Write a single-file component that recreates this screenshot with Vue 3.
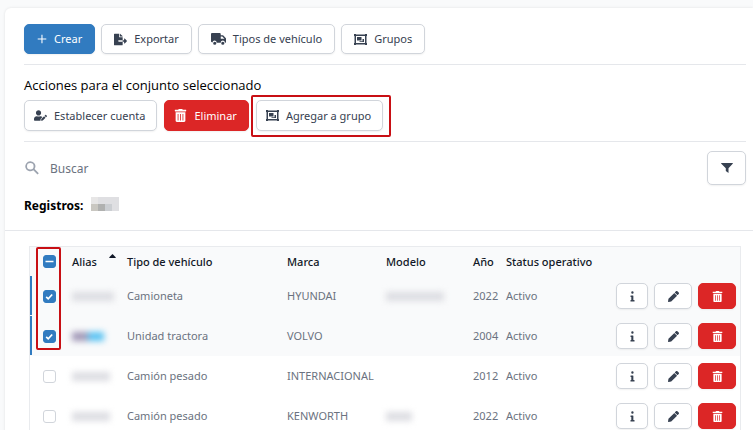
<script setup>
import { ref, computed } from 'vue'

const icons = {
  plus: { box: '0 0 14 14', d: 'M6.2 1h1.5v5.3H13v1.5H7.700V13H6.200V7.800H1V6.300h5.200z' },
  export: { box: '0 0 576 512', d: 'M384 121.900c0-6.300-2.500-12.400-7-16.900L279.100 7c-4.500-4.500-10.600-7-17-7H256v128h128zM571 308l-95.700-96.400c-10.100-10.100-27.400-3-27.400 11.300V288h-64v64h64v65.200c0 14.300 17.300 21.400 27.400 11.300L571 332c6.600-6.600 6.600-17.400 0-24zm-379 28v-32c0-8.800 7.200-16 16-16h176V160H248c-13.200 0-24-10.800-24-24V0H24C10.700 0 0 10.700 0 24v464c0 13.300 10.700 24 24 24h336c13.300 0 24-10.700 24-24V352H208c-8.800 0-16-7.200-16-16z' },
  truck: { box: '0 0 640 512', d: 'M48 0h320c26 0 48 22 48 48v48h76c13 0 25 5 34 14l100 100c9 9 14 21 14 34v124c0 26-12 48-32 48h-16c0-58-42-96-88-96s-88 38-88 96H240c0-58-42-96-88-96s-80 34-88 80C32 400 0 376 0 352V48C0 22 22 0 48 0zm368 144v96h160l-96-96zM160 368a68 68 0 1 1 0 136 68 68 0 0 1 0-136zm344 0a68 68 0 1 1 0 136 68 68 0 0 1 0-136z' },
  group: { box: '0 0 13 13', d: 'M0 1h2v.5h9V1h2v2h-.5v7h.5v2h-2v-.5H2v.5H0v-2h.5V3H0zM2 3v7h9V3zM3 4h4.500v3.500H3zM8.500 6H10v3H5.500v-.700h3z', rule: 'evenodd' },
  userEdit: { box: '0 0 640 512', d: 'M224 256c70.700 0 128-57.300 128-128S294.700 0 224 0 96 57.300 96 128s57.300 128 128 128zm89.600 32h-16.700c-22.200 10.200-46.900 16-72.900 16s-50.600-5.800-72.900-16h-16.700C60.200 288 0 348.200 0 422.400V464c0 26.500 21.500 48 48 48h274.900c-2.400-6.800-3.400-14-2.600-21.300l6.800-60.900 1.200-11.100 7.900-7.900 77.300-77.300c-24.500-27.700-60-45.500-99.900-45.500zm45.300 145.300l-6.800 61c-1.100 10.200 7.500 18.800 17.600 17.600l60.900-6.800 137.900-137.900-71.700-71.700zM633 268.900L595.100 231c-9.300-9.300-24.500-9.300-33.800 0l-41.800 41.800 71.800 71.700 41.700-41.700c9.300-9.400 9.300-24.500 0-33.900z' },
  pencil: { box: '0 0 512 512', d: 'M497.900 142.100l-46.100 46.100c-4.700 4.700-12.300 4.700-17 0l-111-111c-4.700-4.700-4.700-12.300 0-17l46.100-46.100c18.700-18.700 49.100-18.700 67.900 0l60.100 60.100c18.800 18.700 18.800 49.100 0 67.900zM284.200 99.800L21.600 362.400.4 483.900c-2.900 16.400 11.400 30.600 27.800 27.800l121.500-21.300 262.600-262.600c4.700-4.700 4.700-12.300 0-17l-111-111c-4.800-4.700-12.400-4.700-17.100 0z' },
  info: { box: '0 0 192 512', d: 'M20 424h20V280H20c-11 0-20-9-20-20v-36c0-11 9-20 20-20h96c11 0 20 9 20 20v200h36c11 0 20 9 20 20v28c0 11-9 20-20 20H20c-11 0-20-9-20-20v-28c0-11 9-20 20-20zM92 16a56 56 0 1 1 0 112 56 56 0 0 1 0-112z' },
  filter: { box: '0 0 12 12', d: 'M.5 1h11c.4 0 .5.500.2.800L7.500 6.300V11L4.800 9V6.300L.3 1.800C0 1.500.1 1 .5 1z' },
  search: { box: '0 0 14 14', d: 'M5.300.3a5 5 0 1 0 3 9l4.200 4.200 1.300-1.300-4.200-4.200A5 5 0 0 0 5.300.3zm0 1.700a3.300 3.300 0 1 1 0 6.600 3.300 3.300 0 0 1 0-6.600z' },
  trash: { box: '0 0 448 512', d: 'M432 32H312l-9-19a24 24 0 0 0-22-13H167c-9 0-17 5-21 13l-10 19H16C7 32 0 39 0 48v32c0 9 7 16 16 16h416c9 0 16-7 16-16V48c0-9-7-16-16-16zM32 128h384v336c0 27-21 48-48 48H80c-27 0-48-21-48-48zm80 64v256h32V192zm96 0v256h32V192zm96 0v256h32V192z', rule: 'evenodd' },
}

const Icon = (props) => {
  const icon = icons[props.name]
  return h('svg', { viewBox: icon.box, class: 'icon', 'aria-hidden': 'true' }, [
    h('path', { d: icon.d, fill: 'currentColor', 'fill-rule': icon.rule || 'nonzero' }),
  ])
}
Icon.props = ['name']

const search = ref('')
const rows = ref([
  { checked: true, tint: 'gray', alias: 42, type: 'Camioneta', brand: 'HYUNDAI', model: 58, year: 2022 },
  { checked: true, tint: 'color', alias: 32, type: 'Unidad tractora', brand: 'VOLVO', model: 0, year: 2004 },
  { checked: false, tint: 'gray', alias: 38, type: 'Camión pesado', brand: 'INTERNACIONAL', model: 0, year: 2012 },
  { checked: false, tint: 'gray', alias: 38, type: 'Camión pesado', brand: 'KENWORTH', model: 26, year: 2022 },
])
const all = computed(() => rows.value.every((r) => r.checked))
const some = computed(() => !all.value && rows.value.some((r) => r.checked))
const toggleAll = (e) => rows.value.forEach((r) => (r.checked = e.target.checked))
</script>

<script>
import { h } from 'vue'
</script>

<template>
  <main class="panel">
    <div class="toolbar">
      <button class="btn primary" type="button"><Icon name="plus" class="i-plus" />Crear</button>
      <button class="btn" type="button"><Icon name="export" />Exportar</button>
      <button class="btn" type="button"><Icon name="truck" class="i-truck" />Tipos de vehículo</button>
      <button class="btn" type="button"><Icon name="group" />Grupos</button>
    </div>
    <section class="bulk">
      <p class="bulk-title">Acciones para el conjunto seleccionado</p>
      <div class="bulk-actions">
        <button class="btn tall" type="button"><Icon name="userEdit" />Establecer cuenta</button>
        <button class="btn tall danger" type="button"><Icon name="trash" />Eliminar</button>
        <span class="marked"><button class="btn tall" type="button"><Icon name="group" />Agregar a grupo</button></span>
      </div>
    </section>
    <div class="search">
      <label class="search-label" for="q" aria-label="Buscar"><Icon name="search" class="i-search" /></label>
      <input id="q" v-model="search" type="text" placeholder="Buscar" />
      <button class="btn filter" type="button" aria-label="Filtrar"><Icon name="filter" /></button>
    </div>
    <h2 class="count">Registros:<span class="mosaic"><i /><i /><i /><i /><i /><i /><i /><i /></span></h2>
    <div class="records">
      <table>
        <colgroup>
          <col class="c-check" /><col class="c-alias" /><col class="c-type" /><col class="c-brand" />
          <col class="c-model" /><col class="c-year" /><col /><col class="c-actions" />
        </colgroup>
        <thead>
          <tr>
            <th class="check"><input type="checkbox" aria-label="Seleccionar todo" :checked="all" :indeterminate="some" @change="toggleAll" /></th>
            <th><span class="sort">Alias<svg class="caret" viewBox="0 0 8 5" aria-hidden="true"><path d="M4 0l4 4v1H0V4z" fill="#111827" /></svg></span></th>
            <th>Tipo de vehículo</th>
            <th>Marca</th>
            <th>Modelo</th>
            <th>Año</th>
            <th>Status operativo</th>
            <th></th>
          </tr>
        </thead>
        <tbody>
          <tr v-for="(row, n) in rows" :key="n" :class="{ selected: row.checked }">
            <td class="check"><input v-model="row.checked" type="checkbox" aria-label="Seleccionar registro" /></td>
            <td><span class="redacted" :class="row.tint" :style="{ width: row.alias + 'px' }" /></td>
            <td>{{ row.type }}</td>
            <td>{{ row.brand }}</td>
            <td><span v-if="row.model" class="redacted gray" :style="{ width: row.model + 'px' }" /></td>
            <td>{{ row.year }}</td>
            <td>Activo</td>
            <td>
              <div class="row-actions">
                <button class="btn small info" type="button" aria-label="Información"><Icon name="info" /></button>
                <button class="btn small" type="button" aria-label="Editar"><Icon name="pencil" /></button>
                <button class="btn small danger" type="button" aria-label="Eliminar"><Icon name="trash" /></button>
              </div>
            </td>
          </tr>
        </tbody>
      </table>
      <div class="selection-mark" />
    </div>
  </main>
</template>

<style>
body {
  background: #f9fafb;
  overflow: hidden;
}
</style>

<style scoped>
.panel {
  margin: 8px 0 0 5px;
  padding-top: 16px;
  background: #fff;
  border-radius: 6px 0 0 0;
  box-shadow: 0 0 3px rgba(0, 0, 0, 0.1);
  font-family: "Noto Sans", sans-serif;
  font-size: 11px;
  color: #000;
}
.toolbar,
.bulk {
  margin: 0 7px 0 19px;
  padding-bottom: 10px;
  border-bottom: 1px solid #e5e7eb;
}
.toolbar {
  display: flex;
  gap: 6px;
}
.bulk-actions {
  display: flex;
  gap: 7px;
}
.bulk-title {
  margin: 0;
  padding: 11px 0 6px;
  font-family: "Open Sans", "Noto Sans", sans-serif;
  font-size: 13px;
  line-height: 18px;
}
.btn {
  display: inline-flex;
  align-items: center;
  justify-content: center;
  gap: 7px;
  box-sizing: border-box;
  height: 30px;
  margin: 0;
  padding: 0 12px;
  border: 1px solid #d1d5db;
  border-radius: 5px;
  background: #fff;
  box-shadow: 0 1px 2px rgba(0, 0, 0, 0.06);
  color: #374151;
  font-family: inherit;
  font-size: 11px;
  line-height: 16px;
  white-space: nowrap;
}
.tall {
  height: 31px;
  padding: 0 11px 0 9px;
}
.primary {
  background: #317bc0;
  border-color: #317bc0;
  color: #fff;
}
.danger {
  background: #dc2626;
  border-color: #dc2626;
  color: #fff;
}
.icon {
  display: block;
  width: 13px;
  height: 13px;
}
.i-plus {
  width: 10px;
  height: 10px;
}
.i-truck {
  width: 15px;
  height: 12px;
}
.i-search {
  width: 14px;
  height: 14px;
}
.marked {
  position: relative;
  display: flex;
}
.marked::after,
.selection-mark {
  content: "";
  position: absolute;
  box-sizing: border-box;
  border: 2px solid #c80f14;
  border-radius: 2px;
  pointer-events: none;
}
.marked::after {
  inset: -5px -8px -6px -5px;
}
.search {
  display: flex;
  align-items: center;
  gap: 11px;
  margin: 0 7px 0 20px;
  padding-top: 9px;
}
.search-label {
  color: #9ca3af;
}
.search input {
  flex: 1;
  min-width: 0;
  padding: 2px 0 0;
  border: 0;
  outline: 0;
  background: none;
  font: 12px/18px "Noto Sans", sans-serif;
}
.search input::placeholder {
  color: #6b7280;
  opacity: 1;
}
.filter {
  width: 39px;
  height: 34px;
  padding: 0;
}
.filter .icon {
  width: 12px;
  height: 12px;
}
.count {
  display: flex;
  align-items: center;
  margin: 0;
  padding: 12px 19px 15px;
  border-bottom: 1px solid #e5e7eb;
  font-size: 12px;
  line-height: 18px;
}
.mosaic {
  display: grid;
  grid-template-columns: repeat(4, 7px);
  margin: 0 0 4px 8px;
}
.mosaic i {
  height: 7px;
  background: #dfdfe2;
}
.mosaic i:nth-child(1) {
  background: #e7e6e6;
}
.mosaic i:nth-child(5) {
  background: #c9c7c1;
}
.mosaic i:nth-child(6) {
  background: #b0b1b0;
}
.mosaic i:nth-child(7) {
  background: #cbced2;
}
.records {
  position: relative;
  margin: 15px 12px 0 24px;
  border: 1px solid #e9ebee;
}
table {
  width: 100%;
  table-layout: fixed;
  border-collapse: collapse;
}
.c-check {
  width: 34px;
}
.c-alias {
  width: 55px;
}
.c-type {
  width: 160px;
}
.c-brand {
  width: 99px;
}
.c-model {
  width: 87px;
}
.c-year {
  width: 33px;
}
.c-actions {
  width: 128px;
}
th,
td {
  padding: 0 0 0 8px;
  text-align: left;
  line-height: 16px;
  white-space: nowrap;
}
th {
  height: 29px;
  background: #f9fafb;
  color: #111827;
  font-weight: 500;
}
td {
  height: 40px;
  color: #6b7280;
}
.selected td {
  background: #f9fafb;
}
.selected .check {
  box-shadow: inset 0 -1px #f9fafb, inset 2px 0 #317bc0;
}
.check {
  padding-left: 13px;
}
.check input {
  appearance: none;
  display: block;
  box-sizing: border-box;
  width: 13px;
  height: 13px;
  margin: 0;
  border: 1px solid #d1d5db;
  border-radius: 3px;
  background: #fff center / 11px 11px no-repeat;
}
.check input:checked,
.check input:indeterminate {
  border-color: #317bc0;
  background-color: #317bc0;
}
.check input:checked {
  background-image: url("data:image/svg+xml,%3Csvg xmlns='http://www.w3.org/2000/svg' viewBox='0 0 11 11'%3E%3Cpath d='M2.200 5.800l2 2 4-4.300' fill='none' stroke='white' stroke-width='1.700'/%3E%3C/svg%3E");
}
.check input:indeterminate {
  background-image: url("data:image/svg+xml,%3Csvg xmlns='http://www.w3.org/2000/svg' viewBox='0 0 11 11'%3E%3Cpath d='M1.500 5.500h8' stroke='white' stroke-width='1.500'/%3E%3C/svg%3E");
}
.sort {
  display: flex;
  justify-content: space-between;
  padding-right: 3px;
}
.caret {
  width: 7px;
  height: 4px;
}
.redacted {
  display: block;
  height: 9px;
  filter: blur(3px);
}
.gray {
  background: #dcdde2;
}
.color {
  background: linear-gradient(90deg, #a097b6 48%, #58c2f2 52%);
}
.row-actions {
  display: flex;
  gap: 6px;
}
td:last-child {
  padding-left: 4px;
}
.small {
  width: 38px;
  height: 26px;
  padding: 0;
}
.info {
  width: 32px;
}
.small .icon {
  width: 11px;
  height: 11px;
}
.selection-mark {
  top: 0;
  left: 6px;
  width: 25px;
  height: 103px;
}
</style>
